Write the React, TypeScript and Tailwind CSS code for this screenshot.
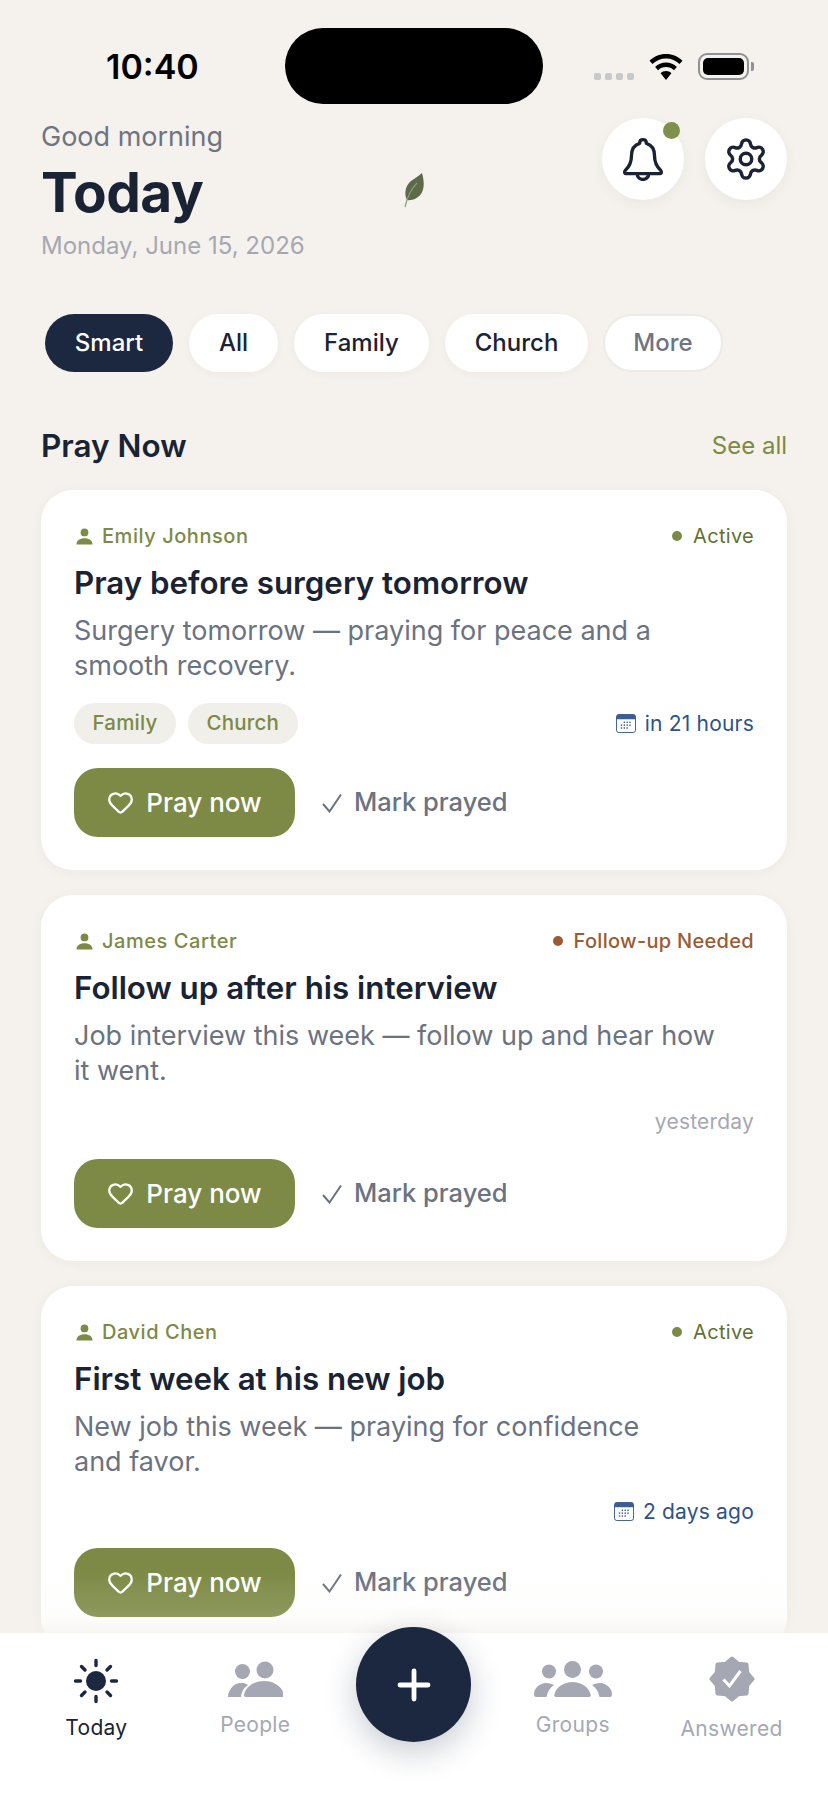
import { Heart, Plus, Settings } from "lucide-react";

type CardProps = {
  name: string;
  status: string;
  statusTone?: "active" | "followup";
  title: string;
  lines: string[];
  tags?: string[];
  when: string;
  whenTone?: "blue" | "muted";
};

const STAR_POINTS = Array.from({ length: 16 }, (_, i) => {
  const r = i % 2 === 0 ? 20.5 : 16.5;
  const a = (i * Math.PI) / 8 - Math.PI / 2;
  return `${(23 + r * Math.cos(a)).toFixed(2)},${(23 + r * Math.sin(a)).toFixed(2)}`;
}).join(" ");

function PersonIcon() {
  return (
    <svg width="17" height="17" viewBox="0 0 17 17" className="fill-[#7c8a45]">
      <circle cx="8.5" cy="4.4" r="3.9" />
      <path d="M0.5 16.5c0-4 3.4-6.2 8-6.2s8 2.2 8 6.2z" />
    </svg>
  );
}

function CalendarIcon() {
  return (
    <svg width="20" height="19" viewBox="0 0 21 20">
      <rect x="0.5" y="0.5" width="20" height="19" rx="2.5" fill="#fff" stroke="#3b5d91" />
      <path d="M0.5 3a2.5 2.5 0 0 1 2.5-2.5h15a2.5 2.5 0 0 1 2.5 2.5v2.5h-20z" fill="#3b5d91" />
      <g fill="#3b5d91">
        <rect x="8" y="8" width="1.5" height="1.5" />
        <rect x="11" y="8" width="1.5" height="1.5" />
        <rect x="14" y="8" width="1.5" height="1.5" />
        <rect x="5" y="11" width="1.5" height="1.5" />
        <rect x="8" y="11" width="1.5" height="1.5" />
        <rect x="11" y="11" width="1.5" height="1.5" />
        <rect x="14" y="11" width="1.5" height="1.5" />
        <rect x="5" y="14" width="1.5" height="1.5" />
        <rect x="8" y="14" width="1.5" height="1.5" />
        <rect x="11" y="14" width="1.5" height="1.5" />
      </g>
    </svg>
  );
}

function PrayerCard({
  name,
  status,
  statusTone = "active",
  title,
  lines,
  tags,
  when,
  whenTone = "blue",
}: CardProps) {
  return (
    <article className="rounded-[32px] bg-white px-[33px] pt-[34px] pb-[33px] shadow-[0_2px_14px_rgba(60,50,30,0.04)]">
      <div className="flex h-[24px] items-center justify-between text-[20px] leading-[24px] font-medium tracking-[0.55px]">
        <div className="flex items-center gap-[9px] pl-[2px] text-[#7c8a45]">
          <PersonIcon />
          <span>{name}</span>
        </div>
        <div className="flex items-center gap-[11px] tracking-[0.3px]">
          <span
            className={
              statusTone === "active"
                ? "size-[10px] rounded-full bg-[#7c8a45]"
                : "size-[10px] rounded-full bg-[#9c5a32]"
            }
          />
          <span className={statusTone === "active" ? "font-normal text-[#5f7030]" : "text-[#9c5a32]"}>
            {status}
          </span>
        </div>
      </div>
      <h3 className="mt-[17px] text-[31.3px] leading-[36px] font-semibold text-[#1a2333]">{title}</h3>
      <p className="mt-[12px] text-[27px] leading-[35px] text-[#6b7280]">
        {lines.map((line) => (
          <span key={line} className="block">
            {line}
          </span>
        ))}
      </p>
      <div
        className={
          tags
            ? "mt-[20px] flex h-[41px] items-center justify-between"
            : whenTone === "blue"
              ? "mt-[20px] flex h-[25px] items-center justify-between"
              : "mt-[20px] flex h-[27px] items-center justify-between"
        }
      >
        <div className="flex gap-[12px]">
          {tags?.map((tag) => (
            <span
              key={tag}
              className="flex h-[41px] items-center rounded-full bg-[#f1efea] px-[18.500px] text-[20.500px] font-medium tracking-[0.2px] text-[#7c8a45]"
            >
              {tag}
            </span>
          ))}
        </div>
        <div
          className={
            whenTone === "blue"
              ? "flex items-center gap-[9px] text-[21px] tracking-[0.2px] text-[#2f5288]"
              : "flex items-center gap-[9px] text-[21px] tracking-[0.2px] text-[#a5a8b3]"
          }
        >
          {whenTone === "blue" && <CalendarIcon />}
          <span>{when}</span>
        </div>
      </div>
      <div className="mt-[24px] flex items-center">
        <button
          type="button"
          className="flex h-[69px] w-[221px] items-center justify-center gap-[12px] rounded-[24px] bg-[#7c8a45] text-[26px] font-medium text-white"
        >
          <Heart size={27} strokeWidth={2} />
          <span>Pray now</span>
        </button>
        <button
          type="button"
          className="ml-[27px] flex items-center gap-[12px] text-[25.500px] font-medium text-[#6b7280]"
        >
          <svg width="20" height="20" viewBox="0 0 20 20" fill="none" stroke="#6b7280" strokeWidth="2">
            <path d="M1 11l6.500 7.500L19 1.500" />
          </svg>
          <span>Mark prayed</span>
        </button>
      </div>
    </article>
  );
}

function TabLabel({ label, active, className }: { label: string; active?: boolean; className: string }) {
  return (
    <span
      className={
        (active ? "text-[#1a2333] " : "text-[#a5a8b3] ") +
        "text-[21px] leading-[26px] tracking-[0.3px] " +
        className
      }
    >
      {label}
    </span>
  );
}

export default function App() {
  const chips = ["All", "Family", "Church"];

  return (
    <div className="relative flex h-[1800px] w-[828px] flex-col overflow-hidden bg-[#f5f2ed] font-['Inter',sans-serif]">
      <main className="relative min-h-0 flex-1 overflow-hidden">
        {/* status bar */}
        <div className="flex h-[82px] items-start pt-[28px]">
          <span className="mt-[21px] ml-[106px] w-[92px] text-[34px] leading-[36px] font-semibold text-black">
            10:40
          </span>
          <div className="ml-[87px] h-[76px] w-[258px] rounded-[38px] bg-black" />
          <div className="ml-[51px] flex gap-[4px] pt-[45px]">
            <span className="size-[7px] rounded-[2px] bg-[#c8c9cc]" />
            <span className="size-[7px] rounded-[2px] bg-[#c8c9cc]" />
            <span className="size-[7px] rounded-[2px] bg-[#c8c9cc]" />
            <span className="size-[7px] rounded-[2px] bg-[#c8c9cc]" />
          </div>
          <svg width="34" height="26" viewBox="0 0 34 26" className="mt-[26px] ml-[15px]">
            <path d="M17 0C10.500 0 4.800 2.500 0.500 6.700l3 3.300C7 6.500 11.800 4.500 17 4.500s10 2 13.500 5.500l3-3.300C29.200 2.500 23.500 0 17 0z" />
            <path d="M17 8.500c-4.300 0-8.100 1.700-10.900 4.400l3 3.300c2-2 4.800-3.200 7.900-3.200s5.900 1.200 7.900 3.200l3-3.300C25.100 10.200 21.300 8.500 17 8.500z" />
            <path d="M17 17c-2.200 0-4.100 0.900-5.400 2.300L17 26l5.400-6.700C21.100 17.900 19.200 17 17 17z" />
          </svg>
          <div className="mt-[25px] ml-[15px] flex items-center">
            <div className="flex h-[27px] w-[51px] rounded-[9px] border-2 border-[#8f9196] p-[3px]">
              <div className="flex-1 rounded-[5px] bg-black" />
            </div>
            <div className="ml-[2px] h-[9px] w-[3px] rounded-r-[2px] bg-[#8f9196]" />
          </div>
        </div>

        {/* header */}
        <header className="flex justify-between pr-[41px] pl-[41px]">
          <div>
            <p className="mt-[38px] text-[27px] leading-[34px] text-[#6f7482]">Good morning</p>
            <h1 className="mt-[7px] text-[55px] leading-[62px] font-bold tracking-[-0.5px] text-[#1a2333]">Today</h1>
            <p className="mt-[8px] text-[24px] leading-[30px] text-[#a5a8b3]">Monday, June 15, 2026</p>
          </div>
          <div className="mt-[36px] flex gap-[21px]">
            <button
              type="button"
              className="relative flex size-[82px] items-center justify-center rounded-full bg-white shadow-[0_4px_14px_rgba(60,50,30,0.05)]"
            >
              <svg width="42" height="44" viewBox="0 0 40 42" fill="none" stroke="#1a2333" strokeWidth="3.200" strokeLinejoin="round">
                <path d="M20 2.500C18 2.500 16.800 4 16.800 6C11.500 7.500 9 12 9 18C9 25 7 28.500 3 32Q1.500 34.500 4 35H36Q38.500 34.500 37 32C33 28.500 31 25 31 18C31 12 28.500 7.500 23.200 6C23.200 4 22 2.500 20 2.500Z" />
                <path d="M14.500 35A5.500 5.500 0 0 0 25.500 35" />
              </svg>
              <span className="absolute top-[4px] right-[4px] size-[17px] rounded-full bg-[#7f8f4c]" />
            </button>
            <button
              type="button"
              className="flex size-[82px] items-center justify-center rounded-full bg-white shadow-[0_4px_14px_rgba(60,50,30,0.05)]"
            >
              <Settings size={46} strokeWidth={1.8} color="#1a2333" />
            </button>
          </div>
        </header>

        {/* drifting leaf */}
        <svg width="24" height="36" viewBox="0 0 24 36" className="absolute top-[172px] left-[402px]">
          <path d="M20 1C22 8 23 16 19 22C16 26 10 29 5 28C2 22 3 14 9 9C13 6 17 4 20 1Z" fill="#5d6a4a" />
          <path d="M3 35C5 26 9 17 15 11" fill="none" stroke="#8d9a72" strokeWidth="1.200" />
        </svg>

        {/* filter chips */}
        <div className="mt-[53px] flex gap-[16px] pl-[45px] text-[24px] font-medium">
          <span className="flex h-[58px] w-[128px] items-center justify-center rounded-full bg-[#1b2840] text-white">
            Smart
          </span>
          {chips.map((chip) => (
            <span
              key={chip}
              className="flex h-[58px] items-center rounded-full bg-white px-[30px] text-[#1a2333] shadow-[0_2px_8px_rgba(60,50,30,0.04)]"
            >
              {chip}
            </span>
          ))}
          <span className="-ml-[1px] flex h-[58px] items-center rounded-full border-2 border-[#ebebe8] bg-white px-[28px] text-[#6f7482]">
            More
          </span>
        </div>

        {/* section */}
        <div className="mt-[54px] flex items-center justify-between px-[41px]">
          <h2 className="text-[31.500px] leading-[40px] font-semibold text-[#1a2333]">Pray Now</h2>
          <span className="text-[24px] text-[#7c8a45]">See all</span>
        </div>

        <div className="mt-[24px] flex flex-col gap-[25px] px-[41px]">
          <PrayerCard
            name="Emily Johnson"
            status="Active"
            title="Pray before surgery tomorrow"
            lines={["Surgery tomorrow — praying for peace and a", "smooth recovery."]}
            tags={["Family", "Church"]}
            when="in 21 hours"
          />
          <PrayerCard
            name="James Carter"
            status="Follow-up Needed"
            statusTone="followup"
            title="Follow up after his interview"
            lines={["Job interview this week — follow up and hear how", "it went."]}
            when="yesterday"
            whenTone="muted"
          />
          <PrayerCard
            name="David Chen"
            status="Active"
            title="First week at his new job"
            lines={["New job this week — praying for confidence", "and favor."]}
            when="2 days ago"
          />
        </div>

        <div className="absolute right-0 bottom-0 left-0 h-[63px] bg-gradient-to-b from-transparent via-[#f5f2ed]/15 via-75% to-[#f5f2ed]/70" />
      </main>

      {/* tab bar */}
      <nav className="relative grid h-[167px] shrink-0 grid-cols-5 bg-white px-[17px]">
        <div className="flex flex-col items-center pt-[25px]">
          <svg width="46" height="46" viewBox="0 0 46 46" stroke="#1b2840" strokeWidth="3.400" strokeLinecap="round">
            <circle cx="23" cy="23" r="10" fill="#1b2840" stroke="none" />
            <path d="M23 2.500v5M23 38.500v5M2.500 23h5M38.500 23h5M8.500 8.500l3.500 3.500M34 34l3.500 3.500M8.500 37.500l3.500-3.500M34 12l3.500-3.500" fill="none" />
          </svg>
          <TabLabel label="Today" active className="mt-[11px]" />
        </div>
        <div className="flex flex-col items-center pt-[28px]">
          <svg width="56" height="36" viewBox="0 0 56 36" fill="#a5a8b3">
            <circle cx="15.500" cy="10.500" r="7.500" />
            <circle cx="38" cy="9" r="8.500" />
            <path d="M1 36c0-6 5-14 13-14 3 0 5 .6 7 2-4 2.500-6.500 7-7 12z" />
            <path d="M17 34c1-7 9-14 20-14s19 7 20 14c0 1-.6 2-2 2H19c-1.400 0-2-1-2-2z" />
          </svg>
          <TabLabel label="People" className="mt-[15px]" />
        </div>
        <div className="flex justify-center">
          <button
            type="button"
            className="-mt-[6px] flex size-[115px] items-center justify-center rounded-full bg-[#1b2840] text-white shadow-[0_10px_32px_rgba(26,39,68,0.24)]"
          >
            <Plus size={48} strokeWidth={2.400} />
          </button>
        </div>
        <div className="flex flex-col items-center pt-[28px]">
          <svg width="78" height="36" viewBox="0 0 78 36" fill="#a5a8b3">
            <circle cx="15" cy="10.500" r="7" />
            <circle cx="38.500" cy="8.500" r="8.500" />
            <circle cx="62" cy="10.500" r="7" />
            <path d="M0 33c0-6 6-11 12-11 3 0 6 1 8 2-4 2.500-6.500 7-7.500 12H2c-1.200 0-2-1-2-3z" />
            <path d="M22 36c-1.400 0-2-1-1.600-2.500C22 26 30 21 38.500 21s16.500 5 18.100 12.500c.4 1.500-.2 2.500-1.600 2.500z" />
            <path d="M78 33c0-6-6-11-12-11-3 0-6 1-8 2 4 2.500 6.500 7 7.500 12H76c1.200 0 2-1 2-3z" />
          </svg>
          <TabLabel label="Groups" className="mt-[15px]" />
        </div>
        <div className="flex flex-col items-center pt-[23px]">
          <svg width="46" height="46" viewBox="0 0 46 46">
            <polygon points={STAR_POINTS} fill="#a5a8b3" stroke="#a5a8b3" strokeWidth="4" strokeLinejoin="round" />
            <path d="M14.500 23.500l6 6.500 11-15" fill="none" stroke="#fff" strokeWidth="3" />
          </svg>
          <TabLabel label="Answered" className="mt-[14px]" />
        </div>
      </nav>
    </div>
  );
}
